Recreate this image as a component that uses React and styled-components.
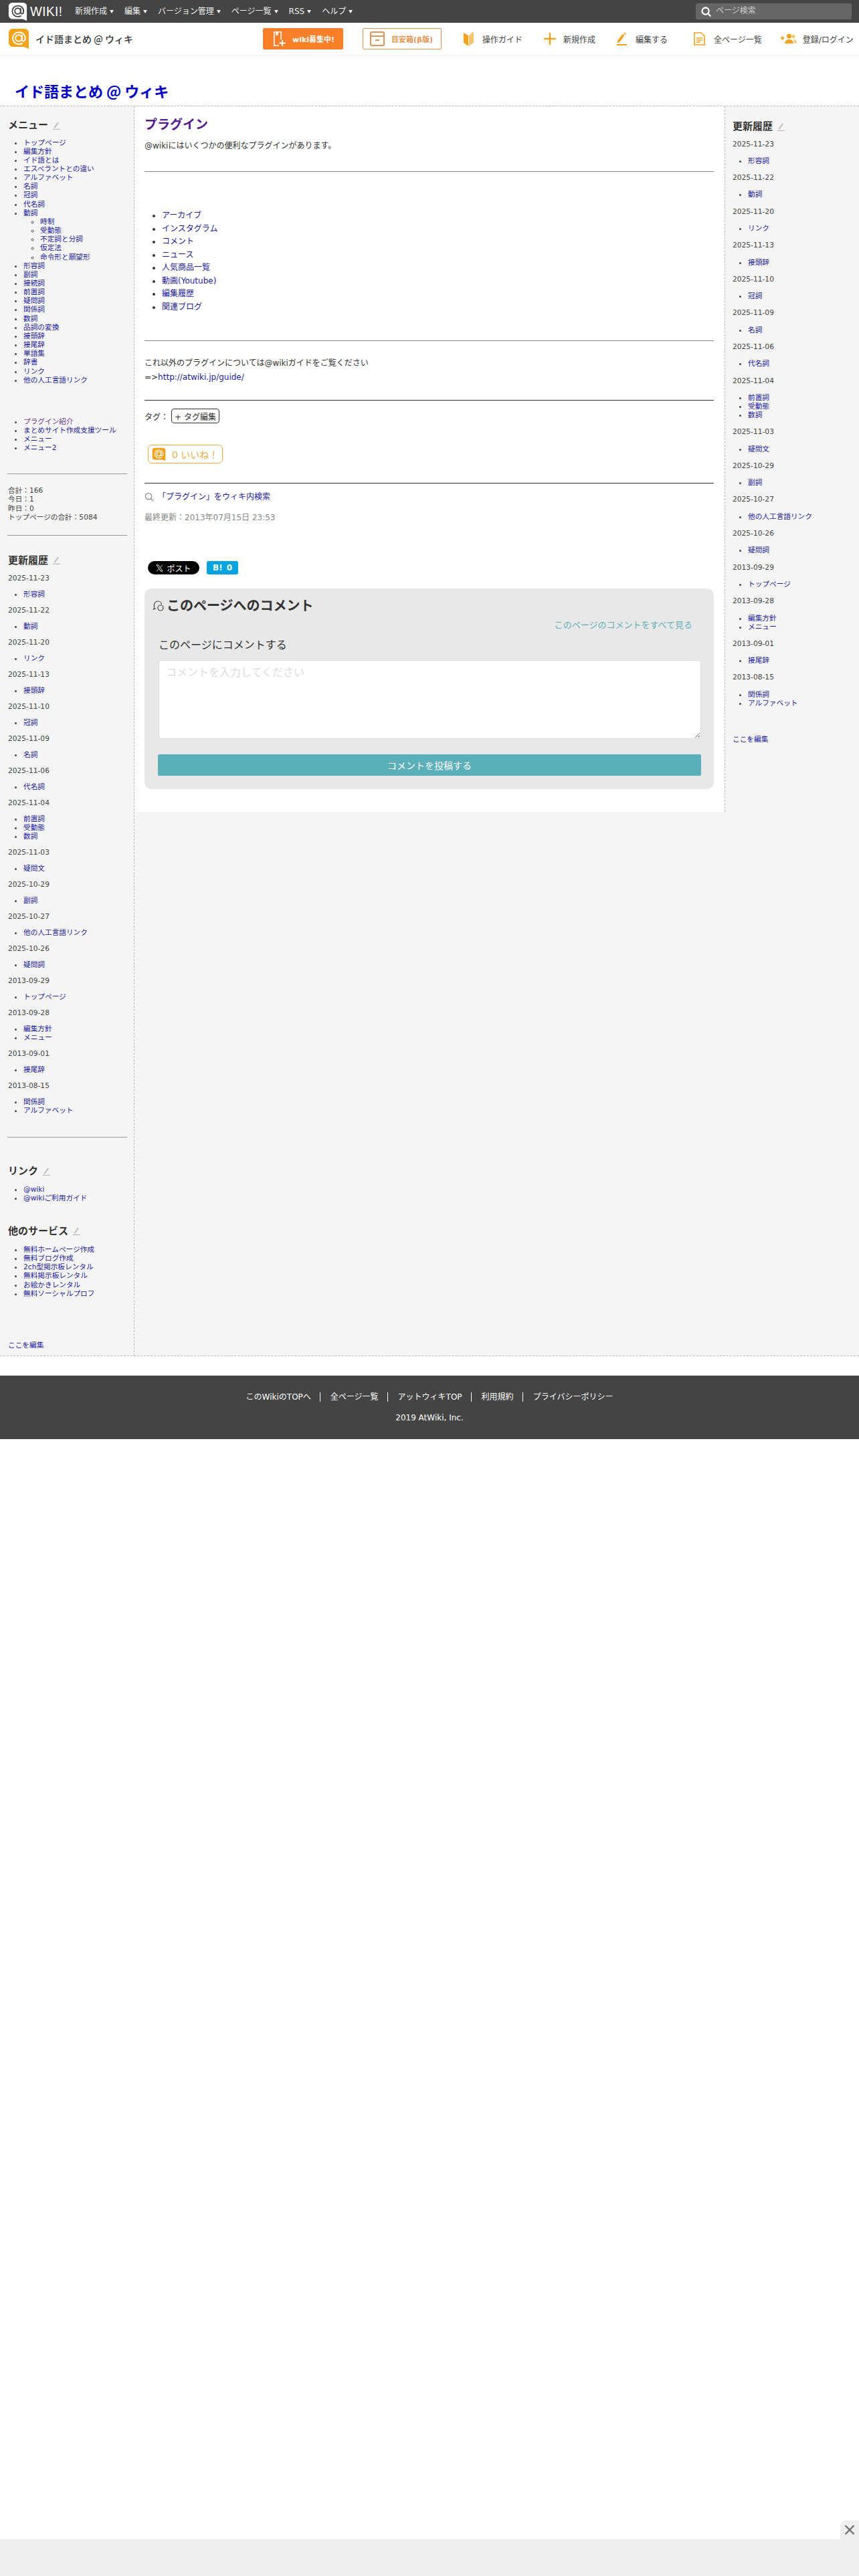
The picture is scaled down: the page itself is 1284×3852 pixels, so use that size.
import React from 'react';
import styled, { createGlobalStyle } from 'styled-components';

const Global = createGlobalStyle`
  html, body { margin: 0; padding: 0; background: #fff; }
  body { font-family: "DejaVu Sans", "Noto Sans CJK JP", sans-serif; color: #333; font-size: 12px; }
  * { box-sizing: border-box; }
`;

const ORANGE = '#f5a21b';
const LINK = '#1c1ca8';

const Page = styled.div`width: 1284px; min-height: 3852px; background: #fff; position: relative;`;

const TopBar = styled.div`height: 34px; background: #444; display: flex; align-items: center; padding: 0 11px 0 12px;`;
const BrandLogo = styled.div`display: flex; align-items: center; width: 100px; flex: none;`;
const BrandWord = styled.span`font-family: "Liberation Sans", sans-serif; color: #fff; font-size: 21px; font-weight: 400; margin-left: 4px; letter-spacing: 0.5px; transform: scaleX(0.9); transform-origin: left;`;
const TopMenu = styled.nav`display: flex; gap: 16px; flex: 1;`;
const TopMenuItem = styled.a`color: #eee; font-size: 12px; display: flex; align-items: center; gap: 4px; line-height: 16px;
  &::after { content: ""; width: 0; height: 0; border-left: 3px solid transparent; border-right: 3px solid transparent; border-top: 5px solid #eee; }
`;
const SearchBox = styled.div`width: 233px; height: 24px; background: #666; border-radius: 3px; display: flex; align-items: center; padding-left: 8px; gap: 7px;`;
const SearchInput = styled.input`background: transparent; border: 0; outline: 0; flex: 1; min-width: 0; font: inherit; font-size: 12px; color: #ddd; padding: 0; margin-top: -2px;
  &::placeholder { color: #ccc; opacity: 1; }
`;

const SubHeader = styled.div`height: 49px; border-bottom: 1px solid #eee; display: flex; align-items: center; padding-left: 12px;`;
const SiteBlock = styled.div`width: 381px; display: flex; align-items: center; gap: 9px; flex: none;`;
const SiteName = styled.span`font-size: 14px; color: #333; font-family: "Noto Sans CJK JP", sans-serif; letter-spacing: 0; font-weight: 500;`;
const RecruitButton = styled.a`width: ${p => p.$w}px; height: 32px; margin-right: ${p => p.$mr}px; flex: none; border-radius: 2px; display: flex; align-items: center; justify-content: flex-start; padding-left: ${p => p.$pl}px; gap: ${p => p.$gap}px; font-size: 11px; font-weight: 700;
  background: ${p => p.$solid ? '#fb7f28' : '#fff'};
  color: ${p => p.$solid ? '#fff' : '#e8904e'};
  border: 1px solid ${p => p.$solid ? '#fb7f28' : '#e39358'};
`;
const NavItem = styled.a`display: flex; align-items: center; margin-left: ${p => p.$ml}px; gap: ${p => p.$gap}px; font-size: 12px; color: #444; flex: none;`;

const TitleBar = styled.div`height: 75px; padding: 38px 0 0 22px;`;
const SiteTitle = styled.h1`margin: 0; font-size: 22px; line-height: 28px; font-weight: 700; color: #0000c8; font-family: "Noto Sans CJK JP", sans-serif; letter-spacing: 0; `;

const Columns = styled.div`display: flex; align-items: flex-start; background: #f5f5f5; border-top: 1px dashed #bbb; border-bottom: 1px dashed #bbb; height: 1870px;`;
const LeftCol = styled.aside`width: 201px; flex: none; border-right: 1px dashed #bbb; height: 100%; padding: 18px 10px 0 12px; font-size: 10.67px; line-height: 13px;`;
const CenterWrap = styled.div`flex: 1; display: flex; align-items: stretch; height: 1055px; min-width: 0;`;
const Main = styled.main`flex: 1; background: #fff; padding: 15px 16px 0 15px; min-width: 0;`;
const RightCol = styled.aside`width: 201px; flex: none; border-left: 1px dashed #bbb; padding: 20px 10px 0 11px; font-size: 10.67px; line-height: 13px;`;

const SideHeading = styled.h3`margin: ${p => p.$mt || 0}px 0 0; font-size: 15px; line-height: 20px; font-weight: 700; color: #333; display: flex; align-items: center; gap: 7px;`;
const SideList = styled.ul`margin: ${p => p.$mt || 0}px 0 0; padding: 0 0 0 23px; list-style: disc; color: #444; line-height: ${p => p.$lh || 13.15}px;`;
const NestedList = styled.ul`margin: 0; padding: 0 0 0 25px; list-style: circle;`;
const SideLink = styled.a`color: ${p => p.$visited ? '#6a3d8f' : LINK}; text-decoration: none;`;
const SideRule = styled.hr`border: 0; border-top: 1px solid #999; margin: ${p => p.$mt}px 0 0 -1px; width: 179px; height: 0;`;
const Stats = styled.div`margin-top: ${p => p.$mt}px; color: #444; line-height: 13.3px;`;
const DateLine = styled.p`margin: ${p => p.$gap}px 0 0; color: #444;`;
const EditFoot = styled.a`display: block; margin-top: ${p => p.$mt}px; color: ${LINK};`;

const PageTitle = styled.h2`margin: 0; font-size: 19px; line-height: 24px; color: #551a8b; font-weight: 700;`;
const Para = styled.p`margin: ${p => p.$mt}px 0 0; line-height: ${p => p.$lh || 16}px; font-size: 12px; color: #333;`;
const Rule = styled.hr`border: 0; border-top: 1px solid ${p => p.$dark ? '#333' : '#888'}; margin: ${p => p.$mt}px 0 0; height: 0;`;
const MainList = styled.ul`margin: ${p => p.$mt}px 0 0; padding: 0 0 0 26px; line-height: 19.5px; font-size: 12px; color: #333;`;
const MainLink = styled.a`color: ${LINK};`;
const TagRow = styled.div`margin-top: 12px; display: flex; align-items: center; height: 22px; font-size: 12px;`;
const TagLabel = styled.span`width: 40px; flex: none;`;
const TagButton = styled.a`height: 22px; width: 72px; border: 1px solid #333; border-radius: 4px; display: flex; align-items: center; justify-content: center; font-size: 12px; color: #333;`;
const LikeButton = styled.a`margin: 32px 0 0 5px; width: 112px; height: 28px; border: 1px solid #f3ab3a; border-radius: 6px; display: flex; align-items: center; padding-left: 5px; gap: 9px; color: #f0ab4c; font-size: 14px;`;
const SearchLinkRow = styled.div`margin-top: 12px; display: flex; align-items: center; gap: 6px; line-height: 16px; font-size: 12px;`;
const Updated = styled.p`margin: 15px 0 0; line-height: 16px; font-size: 12px; color: #888;`;
const ShareRow = styled.div`margin: 57px 0 0 5px; display: flex; gap: 11px;`;
const PostButton = styled.a`width: 77px; height: 20px; border-radius: 10px; background: #000; color: #fff; font-size: 12px; display: flex; align-items: center; justify-content: center; gap: 5px;`;
const HatenaButton = styled.a`width: 47px; height: 20px; border-radius: 3px; background: #00a4de; color: #fff; font-size: 12px; font-weight: 700; display: flex; align-items: center; justify-content: center; gap: 6px;`;

const CommentBox = styled.section`margin-top: 21px; height: 300px; background: #e8e8e8; border-radius: 10px; padding: 13px 19px 20px 20px;`;
const CommentHead = styled.h3`margin: 0 0 0 -8px; font-size: 20px; line-height: 26px; font-weight: 700; color: #333; display: flex; align-items: center; gap: 3px;`;
const AllComments = styled.a`display: block; text-align: right; margin: 8px 13px 0 0; font-size: 13px; line-height: 16px; color: #62aeb6;`;
const CommentLabel = styled.p`margin: 12px 0 0 1px; font-size: 16px; line-height: 20px; color: #333;`;
const CommentArea = styled.textarea`display: block; width: 811px; height: 118px; margin: 12px 0 0 1px; border: 1px solid #ddd; border-radius: 4px; background: #fff; padding: 7px 10px; font: inherit; font-size: 16px; line-height: 22px; resize: vertical; outline: 0;
  &::placeholder { color: #dcdcdc; opacity: 1; }
`;
const SubmitButton = styled.button`display: block; width: 812px; height: 32px; margin-top: 23px; border: 0; border-radius: 2px; background: #5bafb8; color: #fff; font: inherit; font-size: 14px;`;

const Footer = styled.footer`margin-top: 29px; height: 95px; background: #444; color: #fff; font-size: 12px; display: flex; flex-direction: column; align-items: center; padding-top: 25px;`;
const FooterLinks = styled.div`display: flex; height: 14px; align-items: center; margin-left: 0;`;
const FooterLink = styled.a`color: #fff; padding: 0 13px 0 15px; line-height: 14px; height: 14px; display: flex; align-items: center; & + & { border-left: 1px solid #fff; } &:first-child { padding-left: 0; } &:last-child { padding-right: 0; }`;
const Copyright = styled.p`margin: 17px 0 0; line-height: 14px;`;

const AdDock = styled.div`position: fixed; left: 0; right: 0; bottom: 0; height: 55px; background: #efefef; width: 1284px;`;
const AdClose = styled.div`position: absolute; right: 0; top: -28px; width: 28px; height: 28px; background: #efefef; border-top-left-radius: 8px; display: flex; align-items: center; justify-content: center;`;

const AtBubble = ({ size = 32, bg = ORANGE, fg = '#fff' }) => (
  <svg width={size} height={size} viewBox="0 0 32 32">
    <path d="M7 1h18a6 6 0 0 1 6 6v24l-7-3H7a6 6 0 0 1-6-6V7a6 6 0 0 1 6-6z" fill={bg} />
    <circle cx="16" cy="15" r="4.8" fill="none" stroke={fg} strokeWidth="2" />
    <path d="M20.8 11v6.2c0 3 4.4 3 4.8-.8.6-6-3.6-10.2-9.6-10.2a9 9 0 0 0 0 18c2 0 3.4-.4 5-1.2" fill="none" stroke={fg} strokeWidth="2" strokeLinecap="round" />
  </svg>
);
const MiniPencil = () => (
  <svg width="11" height="13" viewBox="0 0 11 13"><path d="M2 9l5.5-7.5 1.5 1L3.5 10 1.8 10.8z" fill="#bbb" /><rect x="0" y="11.8" width="11" height="1.2" fill="#bbb" /></svg>
);
const Glass = ({ c = '#fff', w = 2.4, s = 15 }) => (
  <svg width={s} height={s} viewBox="0 0 16 16"><circle cx="7" cy="7" r="5.4" fill="none" stroke={c} strokeWidth={w} /><path d="M11 11l3.6 3.6" stroke={c} strokeWidth={w} strokeLinecap="round" /></svg>
);
const BookPlus = () => (
  <svg width="20" height="24" viewBox="0 0 20 24"><path d="M2 1h12v12h-1.6V2.6H8.8v5L7 6 5.2 7.6v-5H3.6v18.8h6.4V23H2z" fill="#fff" /><path d="M15 14v9M10.5 18.5h9" stroke="#fff" strokeWidth="2" /></svg>
);
const ArchiveIcon = () => (
  <svg width="22" height="24" viewBox="0 0 22 24"><rect x="1" y="2" width="20" height="20" rx="2" fill="none" stroke="#e39358" strokeWidth="2" /><path d="M1 8h20M8 14h6" stroke="#e39358" strokeWidth="2" /></svg>
);
const GuideIcon = () => (
  <svg width="15" height="24" viewBox="0 0 15 24"><path d="M0 3l7 4v16l-6-4.500c-.6-.4-1-1-1-1.800z" fill={ORANGE} /><path d="M15 1v15.500c0 .8-.4 1.500-1 2L8 23V7z" fill="#f9c56a" /></svg>
);
const PlusIcon = () => (
  <svg width="18" height="18" viewBox="0 0 18 18"><path d="M9 0v18M0 9h18" stroke={ORANGE} strokeWidth="2.400" /></svg>
);
const PenIcon = () => (
  <svg width="16" height="20" viewBox="0 0 16 20"><path d="M1 13l7.500-10 3 2.200L4 15l-3 1.300z" fill={ORANGE} /><path d="M10 1.500l1.300-1 3 2.200-1 1.300z" fill={ORANGE} /><rect x="0" y="18" width="15" height="2" fill={ORANGE} /></svg>
);
const FileIcon = () => (
  <svg width="17" height="20" viewBox="0 0 17 20"><path d="M1 1h10l5 5v13H1z" fill="none" stroke={ORANGE} strokeWidth="1.600" /><path d="M4 9h9M4 12h9M4 15h6" stroke={ORANGE} strokeWidth="1.500" /></svg>
);
const UsersIcon = () => (
  <svg width="24" height="16" viewBox="0 0 24 16"><path d="M2.500 4v6M0 7h5.500" stroke={ORANGE} strokeWidth="1.800" /><circle cx="12.500" cy="4" r="3.500" fill={ORANGE} /><circle cx="19" cy="4.500" r="2.600" fill="#f9c56a" /><path d="M6 15c0-4 3-6 6.500-6s6.500 2 6.500 6z" fill={ORANGE} /><path d="M19 9c3 0 5 2 5 5.500h-3.500c0-2-.5-4-1.500-5.500z" fill="#f9c56a" /></svg>
);
const XMark = () => (
  <svg width="11" height="11" viewBox="0 0 24 24"><path d="M2 2h6l14 20h-6z" fill="none" stroke="#fff" strokeWidth="2" /><path d="M21 2L13.500 10.500M10.500 13.500L3 22" stroke="#fff" strokeWidth="2" /></svg>
);
const ChatIcon = () => (
  <svg width="18" height="18" viewBox="0 0 18 18"><path d="M3 11.500C1 8 3 2 8 2c3.500 0 5.500 2.500 5.500 5M3 11.500L1.500 14 5 13" fill="none" stroke="#444" strokeWidth="1.200" /><circle cx="12" cy="12" r="4" fill="none" stroke="#444" strokeWidth="1.200" /></svg>
);

const menu = [
  ['トップページ'], ['編集方針'], ['イド語とは'], ['エスペラントとの違い'], ['アルファベット'], ['名詞'], ['冠詞'], ['代名詞'],
  ['動詞', ['時制', '受動態', '不定詞と分詞', '仮定法', '命令形と願望形']],
  ['形容詞'], ['副詞'], ['接続詞'], ['前置詞'], ['疑問詞'], ['関係詞'], ['数詞'], ['品詞の変換'], ['接頭辞'], ['接尾辞'], ['単語集'], ['辞書'], ['リンク'], ['他の人工言語リンク'],
];
const history = [
  ['2025-11-23', ['形容詞']], ['2025-11-22', ['動詞']], ['2025-11-20', ['リンク']], ['2025-11-13', ['接頭辞']],
  ['2025-11-10', ['冠詞']], ['2025-11-09', ['名詞']], ['2025-11-06', ['代名詞']], ['2025-11-04', ['前置詞', '受動態', '数詞']],
  ['2025-11-03', ['疑問文']], ['2025-10-29', ['副詞']], ['2025-10-27', ['他の人工言語リンク']], ['2025-10-26', ['疑問詞']],
  ['2013-09-29', ['トップページ']], ['2013-09-28', ['編集方針', 'メニュー']], ['2013-09-01', ['接尾辞']], ['2013-08-15', ['関係詞', 'アルファベット']],
];

const History = ({ gap, first }) => history.map(([d, items], i) => (
  <React.Fragment key={d}>
    <DateLine $gap={i === 0 ? first : gap}>{d}</DateLine>
    <SideList $mt={gap} $lh={13}>
      {items.map(t => <li key={t}><SideLink>{t}</SideLink></li>)}
    </SideList>
  </React.Fragment>
));

const Links = ({ items, mt }) => (
  <SideList $mt={mt}>{items.map(t => <li key={t}><SideLink $visited={t === 'プラグイン紹介'}>{t}</SideLink></li>)}</SideList>
);

export default function App() {
  return (
    <Page>
      <Global />
      <TopBar>
        <BrandLogo>
          <AtBubble size={29} bg="#fff" fg="#444" />
          <BrandWord>WIKI!</BrandWord>
        </BrandLogo>
        <TopMenu>
          {['新規作成', '編集', 'バージョン管理', 'ページ一覧', 'RSS', 'ヘルプ'].map(t => <TopMenuItem key={t}>{t}</TopMenuItem>)}
        </TopMenu>
        <SearchBox>
          <Glass />
          <SearchInput placeholder="ページ検索" />
        </SearchBox>
      </TopBar>

      <SubHeader>
        <SiteBlock>
          <AtBubble size={32} />
          <SiteName>イド語まとめ @ ウィキ</SiteName>
        </SiteBlock>
        <RecruitButton $solid $w={120} $mr={29} $pl={13} $gap={10}><BookPlus />wiki募集中!</RecruitButton>
        <RecruitButton $w={118} $mr={0} $pl={10} $gap={10}><ArchiveIcon />目安箱(β版)</RecruitButton>
        <NavItem $ml={33} $gap={13}><GuideIcon />操作ガイド</NavItem>
        <NavItem $ml={32} $gap={11}><PlusIcon />新規作成</NavItem>
        <NavItem $ml={32} $gap={12}><PenIcon />編集する</NavItem>
        <NavItem $ml={39} $gap={13}><FileIcon />全ページ一覧</NavItem>
        <NavItem $ml={28} $gap={9}><UsersIcon />登録/ログイン</NavItem>
      </SubHeader>

      <TitleBar><SiteTitle>イド語まとめ @ ウィキ</SiteTitle></TitleBar>

      <Columns>
        <LeftCol>
          <SideHeading>メニュー<MiniPencil /></SideHeading>
          <SideList $mt={9.5}>
            {menu.map(([t, sub]) => (
              <li key={t}>
                <SideLink>{t}</SideLink>
                {sub && <NestedList>{sub.map(s => <li key={s}><SideLink>{s}</SideLink></li>)}</NestedList>}
              </li>
            ))}
          </SideList>
          <Links mt={49} items={['プラグイン紹介', 'まとめサイト作成支援ツール', 'メニュー', 'メニュー2']} />
          <SideRule $mt={31.5} />
          <Stats $mt={18}>
            <div>合計：166</div><div>今日：1</div><div>昨日：0</div><div>トップページの合計：5084</div>
          </Stats>
          <SideRule $mt={19.5} />
          <SideHeading $mt={27}>更新履歴<MiniPencil /></SideHeading>
          <History gap={11} first={10.5} />
          <SideRule $mt={33} />
          <SideHeading $mt={40}>リンク<MiniPencil /></SideHeading>
          <Links mt={10.5} items={['@wiki', '@wikiご利用ガイド']} />
          <SideHeading $mt={32.5}>他のサービス<MiniPencil /></SideHeading>
          <Links mt={11.5} items={['無料ホームページ作成', '無料ブログ作成', '2ch型掲示板レンタル', '無料掲示板レンタル', 'お絵かきレンタル', '無料ソーシャルプロフ']} />
          <EditFoot $mt={64}>ここを編集</EditFoot>
        </LeftCol>

        <CenterWrap>
          <Main>
            <PageTitle>プラグイン</PageTitle>
            <Para $mt={12}>@wikiにはいくつかの便利なプラグインがあります。</Para>
            <Rule $mt={30} />
            <MainList $mt={56}>
              {['アーカイブ', 'インスタグラム', 'コメント', 'ニュース', '人気商品一覧', '動画(Youtube)', '編集履歴', '関連ブログ'].map(t => <li key={t}><MainLink>{t}</MainLink></li>)}
            </MainList>
            <Rule $mt={40} />
            <Para $mt={23} $lh={21}>これ以外のプラグインについては@wikiガイドをご覧ください</Para>
            <Para $mt={0} $lh={21}>=&gt;<MainLink>http://atwiki.jp/guide/</MainLink></Para>
            <Rule $mt={23} $dark />
            <TagRow><TagLabel>タグ：</TagLabel><TagButton>+ タグ編集</TagButton></TagRow>
            <LikeButton><AtBubble size={21} />0 いいね！</LikeButton>
            <Rule $mt={29} $dark />
            <SearchLinkRow><Glass c="#777" w={1.2} s={14} /><MainLink>「プラグイン」をウィキ内検索</MainLink></SearchLinkRow>
            <Updated>最終更新：2013年07月15日 23:53</Updated>
            <ShareRow>
              <PostButton><XMark />ポスト</PostButton>
              <HatenaButton><span>B!</span><span>0</span></HatenaButton>
            </ShareRow>
            <CommentBox>
              <CommentHead><ChatIcon />このページへのコメント</CommentHead>
              <AllComments>このページのコメントをすべて見る</AllComments>
              <CommentLabel>このページにコメントする</CommentLabel>
              <CommentArea placeholder="コメントを入力してください" />
              <SubmitButton>コメントを投稿する</SubmitButton>
            </CommentBox>
          </Main>
          <RightCol>
            <SideHeading>更新履歴<MiniPencil /></SideHeading>
            <History gap={12.3} first={9.5} />
            <EditFoot $mt={41}>ここを編集</EditFoot>
          </RightCol>
        </CenterWrap>
      </Columns>

      <Footer>
        <FooterLinks>
          {['このWikiのTOPへ', '全ページ一覧', 'アットウィキTOP', '利用規約', 'プライバシーポリシー'].map(t => <FooterLink key={t}>{t}</FooterLink>)}
        </FooterLinks>
        <Copyright>2019 AtWiki, Inc.</Copyright>
      </Footer>

      <AdDock>
        <AdClose>
          <svg width="16" height="16" viewBox="0 0 16 16"><path d="M1.500 1.500l13 13M14.500 1.500l-13 13" stroke="#6f6f6f" strokeWidth="2.400" /></svg>
        </AdClose>
      </AdDock>
    </Page>
  );
}
